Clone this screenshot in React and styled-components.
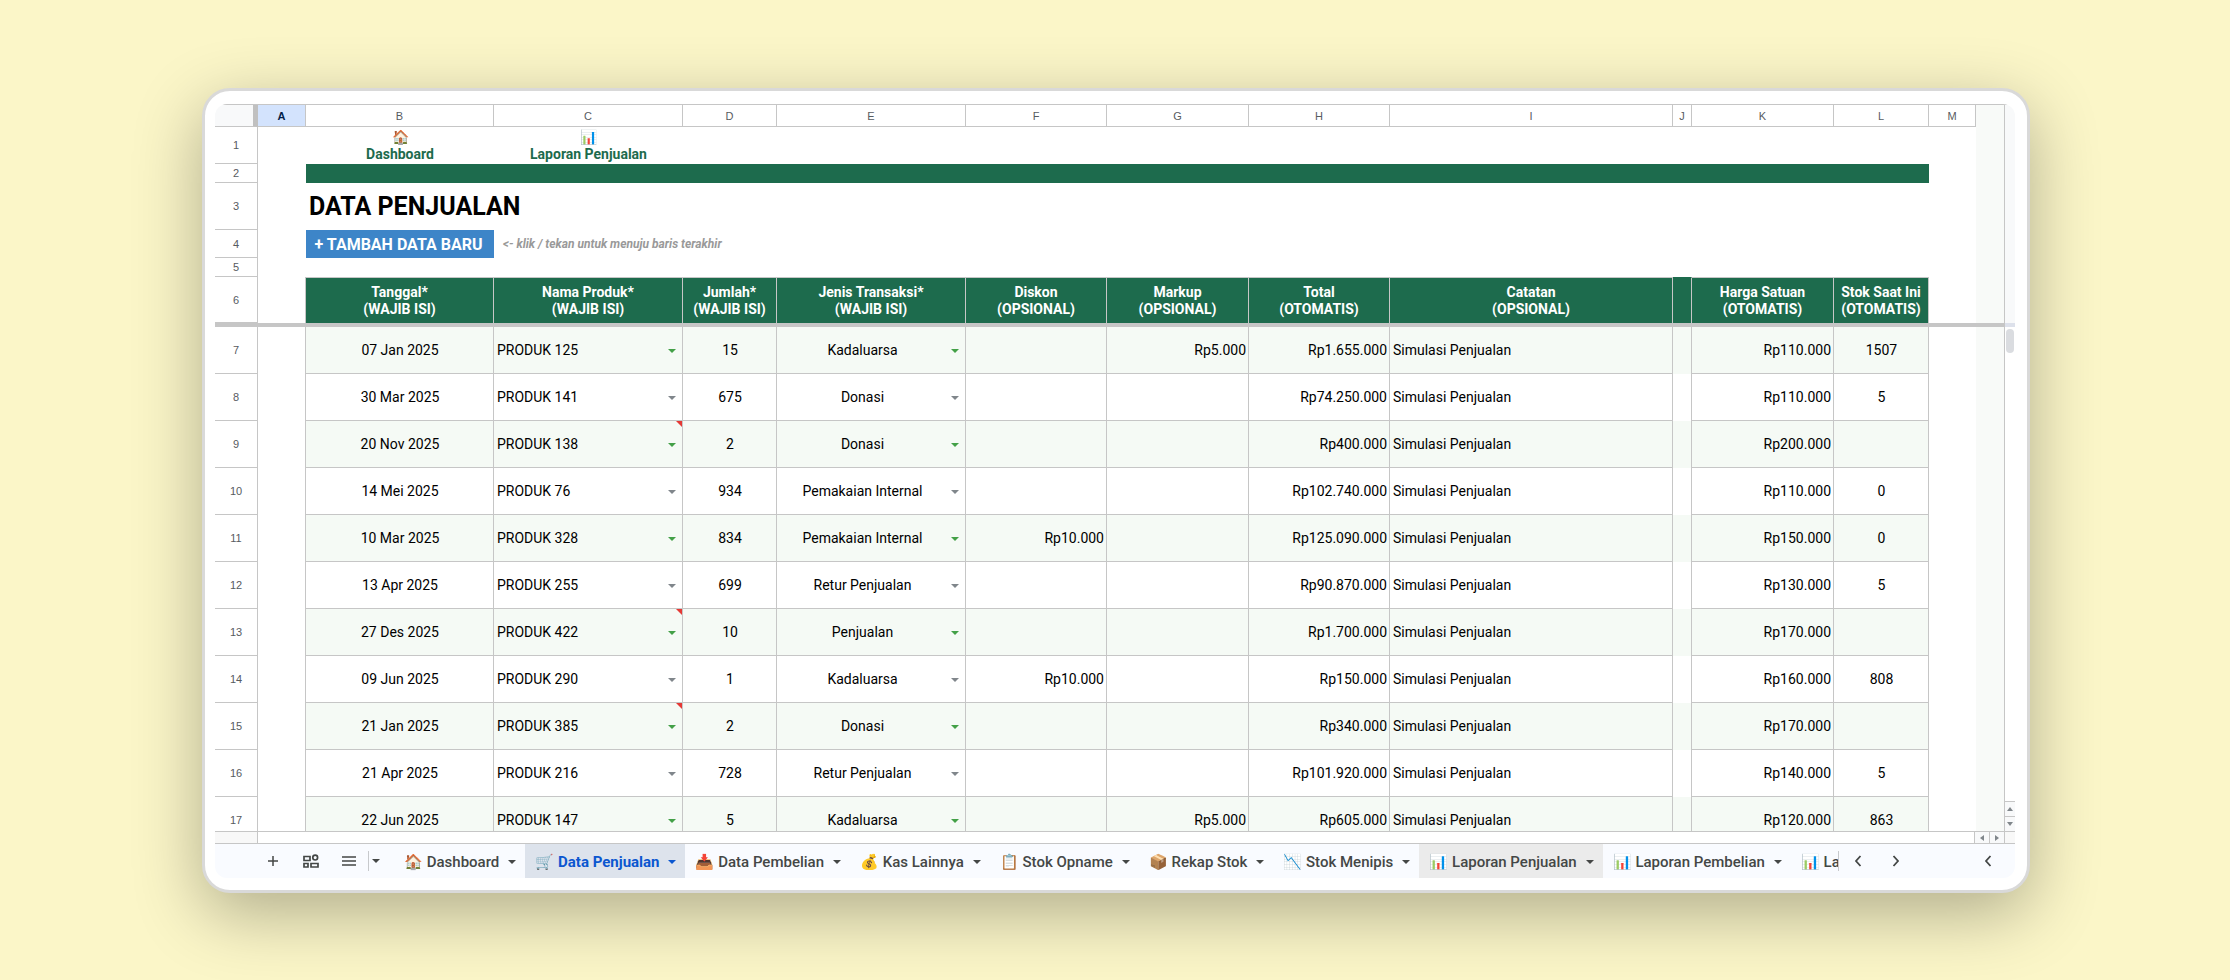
import React from 'react'
import styled, { createGlobalStyle } from 'styled-components'

const GlobalStyle = createGlobalStyle`
    * {
        box-sizing: border-box;
    }

    body {
        margin: 0;
        background: #fbf6c8;
        font-family: Roboto, "Liberation Sans", sans-serif;
    }

    button {
        font-family: inherit;
        border: 0;
        padding: 0;
        background: none;
        color: inherit;
        cursor: pointer;
    }
`

const line = '#c6c6c6'
const green = '#1d6b4d'
const band = '#f5faf5'

const Page = styled.div`
    display: flex;
    height: 100vh;
    min-height: 480px;
    padding: 88px 200px 87px 202px;
`

const Frame = styled.main`
    flex: 1;
    display: flex;
    min-width: 0;
    padding: 13px 12px 12px 10px;
    background: #fff;
    border: 3px solid #d9d9d9;
    border-radius: 28px;
    box-shadow: 0 20px 68px rgba(0, 0, 0, 0.3);
`

const Screen = styled.div`
    flex: 1;
    display: flex;
    flex-direction: column;
    min-width: 0;
    overflow: hidden;
    border-radius: 12px;
`

const Viewport = styled.div`
    flex: 1;
    display: flex;
    min-height: 0;
    border-top: 1px solid ${ line };
    border-bottom: 1px solid ${ line };
`

const Pane = styled.div`
    flex: 1;
    min-width: 0;
    overflow: hidden;
`

const Sheet = styled.table`
    width: 100%;
    table-layout: fixed;
    border-collapse: separate;
    border-spacing: 0;
    color: #000;
    font-size: 14px;
    line-height: 17px;
`

const Row = styled.tr`
    height: ${ p => p.$height }px;
`

const Letter = styled.th`
    padding: 0;
    border-right: 1px solid ${ line };
    border-bottom: 1px solid ${ line };
    background: ${ p => p.$selected ? '#d3e3fd' : '#fff' };
    color: ${ p => p.$selected ? '#041e49' : '#575b5f' };
    font: ${ p => p.$selected ? 'bold' : 'normal' } 11px/12px "Liberation Sans", sans-serif;
`

const Corner = styled.th`
    padding: 0;
    background: #f8f9fa;
    border-right: 5px solid #c0c0c0;
    border-bottom: 1px solid ${ line };
`

const RowNumber = styled.th`
    padding: 0;
    border-right: 1px solid ${ line };
    border-bottom: 1px solid ${ line };
    color: #575b5f;
    font: 11px/12px "Liberation Sans", sans-serif;
`

const Blank = styled.td`
    padding: 0;
    border-right: ${ p => p.$edge ? `1px solid ${ line }` : 0 };
    background: ${ p => p.$fill || 'transparent' };
`

const LinkCell = styled.td`
    padding: 0;
    text-align: center;

    a {
        display: block;
        color: ${ green };
        font-weight: 700;
        text-decoration: none;
    }

    span {
        display: block;
    }
`

const Band = styled.td`
    padding: 0;
    background: ${ green };
`

const TitleCell = styled.td`
    padding: 0 3px;

    h1 {
        margin: 0;
        font-size: 25px;
        line-height: 28px;
        font-weight: 700;
    }
`

const ButtonCell = styled.td`
    padding: 0;
    background: #3d85c8;
`

const AddButton = styled.button`
    display: block;
    width: 100%;
    height: 28px;
    padding-right: 3px;
    color: #fff;
    font-size: 16px;
    font-weight: 700;
`

const Note = styled.td`
    padding: 0 9px;
    color: #999;
    font-size: 12px;
    font-style: italic;
    font-weight: 700;
`

const Heading = styled.th`
    padding: 0;
    background: ${ green };
    border-right: 1px solid ${ line };
    border-top: 1px solid ${ p => p.children ? line : green };
    color: #fff;
    font-weight: 700;
    white-space: pre-line;
`

const Freeze = styled.td`
    height: 4px;
    padding: 0;
    background: #c6c6c6;
`

const Cell = styled.td`
    position: relative;
    padding: 0 2px 0 3px;
    border-right: 1px solid ${ line };
    border-bottom: 1px solid ${ line };
    background: ${ p => p.$banded ? band : '#fff' };
    text-align: ${ p => p.$align || 'center' };
    white-space: nowrap;
`

const Picker = styled.button`
    display: flex;
    align-items: center;
    width: 100%;
    font-size: 14px;
    line-height: 17px;

    span {
        flex: 1;
        text-align: ${ p => p.$align || 'center' };
    }

    svg {
        margin: 1px 4px 0 6px;
        color: ${ p => p.$banded ? '#43a047' : '#80868b' };
    }
`

const ErrorMark = styled.i`
    position: absolute;
    top: 0;
    right: 0;
    border-top: 6px solid #e53935;
    border-left: 6px solid transparent;
`

const ScrollColumn = styled.div`
    display: flex;
    flex-direction: column;
    width: 11px;
    border-left: 1px solid ${ line };
`

const ScrollHead = styled.div`
    height: 222px;
    background: #f8f9fa;
    border-bottom: 4px solid #dde1eb;
`

const ScrollTrack = styled.div`
    flex: 1;
    padding: 2px 1px;
`

const Thumb = styled.div`
    height: 24px;
    border-radius: 4px;
    background: #dadce0;
`

const Stepper = styled.button`
    display: flex;
    align-items: center;
    justify-content: center;
    color: #80868b;
`

const StepperDown = styled(Stepper)`
    height: 15px;
    border-top: 1px solid ${ line };
    background: #f8f9fa;
`

const StepperSide = styled(Stepper)`
    width: 15px;
    border-left: 1px solid ${ line };
    background: #f8f9fa;
`

const ScrollRow = styled.div`
    display: flex;
    height: 12px;
    border-bottom: 1px solid ${ line };
`

const ScrollCorner = styled.div`
    width: ${ p => p.$width }px;
    background: #f8f8f8;
    border-right: ${ p => p.$edge ? `1px solid ${ line }` : 0 };
    border-left: ${ p => p.$edge ? 0 : `1px solid ${ line }` };
`

const Spacer = styled.div`
    flex: 1;
`

const Footer = styled.footer`
    display: flex;
    height: 34px;
    background: #f9fbff;
    color: #444746;
`

const Tools = styled.div`
    display: flex;
    align-items: center;
    padding-left: 39px;
`

const TabScroller = styled.div`
    display: flex;
    align-items: center;
    width: 177px;
    padding-right: 8px;
`

const ToolButton = styled.button`
    display: flex;
    align-items: center;
    justify-content: center;
    width: ${ p => p.$width || 38 }px;
    height: 34px;
`

const Divider = styled.span`
    width: 1px;
    height: 20px;
    background: #c7c9cc;
`

const Tabs = styled.nav`
    flex: 1;
    display: flex;
    min-width: 0;
    overflow: hidden;
    padding-left: 11px;
`

const Tab = styled.button`
    flex: none;
    display: flex;
    align-items: center;
    padding: 1px ${ p => p.$last ? 0 : 9 }px 0 10px;
    background: ${ p => p.$active ? '#dde3ec' : p.$shaded ? '#ebebeb' : 'transparent' };
    color: ${ p => p.$active ? '#0b57d0' : '#444746' };
    font-size: 15px;
    font-weight: ${ p => p.$active ? 700 : 500 };
    white-space: pre;

    svg {
        margin-left: 9px;
    }
`

const columns = [
    ['A', 48], ['B', 188], ['C', 189], ['D', 94], ['E', 189], ['F', 141], ['G', 142],
    ['H', 141], ['I', 283], ['J', 19], ['K', 142], ['L', 95], ['M', 47],
]

const headings = [
    'Tanggal*\n(WAJIB ISI)',
    'Nama Produk*\n(WAJIB ISI)',
    'Jumlah*\n(WAJIB ISI)',
    'Jenis Transaksi*\n(WAJIB ISI)',
    'Diskon\n(OPSIONAL)',
    'Markup\n(OPSIONAL)',
    'Total\n(OTOMATIS)',
    'Catatan\n(OPSIONAL)',
    '',
    'Harga Satuan\n(OTOMATIS)',
    'Stok Saat Ini\n(OTOMATIS)',
]

// date, product, qty, type, discount, markup, total, unit price, stock, flagged
const sales = [
    ['07 Jan 2025', 'PRODUK 125', 15, 'Kadaluarsa', '', 'Rp5.000', 'Rp1.655.000', 'Rp110.000', '1507'],
    ['30 Mar 2025', 'PRODUK 141', 675, 'Donasi', '', '', 'Rp74.250.000', 'Rp110.000', '5'],
    ['20 Nov 2025', 'PRODUK 138', 2, 'Donasi', '', '', 'Rp400.000', 'Rp200.000', '', true],
    ['14 Mei 2025', 'PRODUK 76', 934, 'Pemakaian Internal', '', '', 'Rp102.740.000', 'Rp110.000', '0'],
    ['10 Mar 2025', 'PRODUK 328', 834, 'Pemakaian Internal', 'Rp10.000', '', 'Rp125.090.000', 'Rp150.000', '0'],
    ['13 Apr 2025', 'PRODUK 255', 699, 'Retur Penjualan', '', '', 'Rp90.870.000', 'Rp130.000', '5'],
    ['27 Des 2025', 'PRODUK 422', 10, 'Penjualan', '', '', 'Rp1.700.000', 'Rp170.000', '', true],
    ['09 Jun 2025', 'PRODUK 290', 1, 'Kadaluarsa', 'Rp10.000', '', 'Rp150.000', 'Rp160.000', '808'],
    ['21 Jan 2025', 'PRODUK 385', 2, 'Donasi', '', '', 'Rp340.000', 'Rp170.000', '', true],
    ['21 Apr 2025', 'PRODUK 216', 728, 'Retur Penjualan', '', '', 'Rp101.920.000', 'Rp140.000', '5'],
    ['22 Jun 2025', 'PRODUK 147', 5, 'Kadaluarsa', '', 'Rp5.000', 'Rp605.000', 'Rp120.000', '863'],
]

const tabs = [
    { icon: '🏠', label: 'Dashboard' },
    { icon: '🛒', label: 'Data Penjualan', active: true },
    { icon: '📥', label: 'Data Pembelian' },
    { icon: '💰', label: 'Kas Lainnya' },
    { icon: '📋', label: 'Stok Opname' },
    { icon: '📦', label: 'Rekap Stok' },
    { icon: '📉', label: 'Stok Menipis' },
    { icon: '📊', label: 'Laporan Penjualan', shaded: true },
    { icon: '📊', label: 'Laporan Pembelian' },
    { icon: '📊', label: 'La', last: true },
]

const Caret = () => (
    <svg width="8" height="4" viewBox="0 0 8 4" fill="currentColor" aria-hidden="true">
        <path d="M0 0h8L4 4z" />
    </svg>
)

const turns = { up: 180, down: 0, left: 90, right: 270 }

const Arrow = ({ to }) => (
    <svg width="6" height="6" viewBox="0 0 6 6" fill="currentColor" aria-hidden="true">
        <path d="M0 1h6L3 5z" transform={ `rotate(${ turns[to] } 3 3)` } />
    </svg>
)

const Chevron = ({ right }) => (
    <svg width="8" height="12" viewBox="0 0 8 12" fill="none" stroke="currentColor" strokeWidth="1.8" aria-hidden="true">
        <path d={ right ? 'M1.5 1l4.5 5-4.5 5' : 'M6.5 1L2 6l4.5 5' } />
    </svg>
)

const SaleRow = ({ sale, number }) => {
    const [date, product, qty, type, discount, markup, total, price, stock, flagged] = sale
    const banded = number % 2 === 1

    return (
        <Row $height={ 47 }>
            <RowNumber scope="row">{ number }</RowNumber>
            <Blank $edge />
            <Cell $banded={ banded }>{ date }</Cell>
            <Cell $banded={ banded }>
                <Picker $banded={ banded } $align="left">
                    <span>{ product }</span>
                    <Caret />
                </Picker>
                { flagged && <ErrorMark /> }
            </Cell>
            <Cell $banded={ banded }>{ qty }</Cell>
            <Cell $banded={ banded }>
                <Picker $banded={ banded }>
                    <span>{ type }</span>
                    <Caret />
                </Picker>
            </Cell>
            <Cell $banded={ banded } $align="right">{ discount }</Cell>
            <Cell $banded={ banded } $align="right">{ markup }</Cell>
            <Cell $banded={ banded } $align="right">{ total }</Cell>
            <Cell $banded={ banded } $align="left">Simulasi Penjualan</Cell>
            <Blank $edge $fill={ banded ? band : '#fff' } />
            <Cell $banded={ banded } $align="right">{ price }</Cell>
            <Cell $banded={ banded }>{ stock }</Cell>
            <Blank />
            <Blank $fill="#f8faf8" />
        </Row>
    )
}

const SalesSheet = () => (
    <Sheet>
        <colgroup>
            <col width="43" />
            { columns.map(([name, width]) => <col key={ name } width={ width } />) }
            <col width="28" />
        </colgroup>
        <thead>
            <Row $height={ 22 }>
                <Corner />
                { columns.map(([name]) => (
                    <Letter key={ name } scope="col" $selected={ name === 'A' }>{ name }</Letter>
                )) }
                <Blank $fill="#f8faf8" />
            </Row>
        </thead>
        <tbody>
            <Row $height={ 37 }>
                <RowNumber scope="row">1</RowNumber>
                <Blank />
                <LinkCell><a href="#dashboard"><span>🏠</span>Dashboard</a></LinkCell>
                <LinkCell><a href="#laporan"><span>📊</span>Laporan Penjualan</a></LinkCell>
                <Blank colSpan={ 10 } />
                <Blank $fill="#f8faf8" />
            </Row>
            <Row $height={ 19 }>
                <RowNumber scope="row">2</RowNumber>
                <Blank />
                <Band colSpan={ 11 } />
                <Blank />
                <Blank $fill="#f8faf8" />
            </Row>
            <Row $height={ 47 }>
                <RowNumber scope="row">3</RowNumber>
                <Blank />
                <TitleCell colSpan={ 11 }><h1>DATA PENJUALAN</h1></TitleCell>
                <Blank />
                <Blank $fill="#f8faf8" />
            </Row>
            <Row $height={ 28 }>
                <RowNumber scope="row">4</RowNumber>
                <Blank />
                <ButtonCell><AddButton>+ TAMBAH DATA BARU</AddButton></ButtonCell>
                <Note colSpan={ 10 }>{ '<- klik / tekan untuk menuju baris terakhir' }</Note>
                <Blank />
                <Blank $fill="#f8faf8" />
            </Row>
            <Row $height={ 19 }>
                <RowNumber scope="row">5</RowNumber>
                <Blank />
                <Blank colSpan={ 12 } />
                <Blank $fill="#f8faf8" />
            </Row>
            <Row $height={ 46 }>
                <RowNumber scope="row">6</RowNumber>
                <Blank $edge />
                { headings.map((text, i) => <Heading key={ i } scope="col">{ text }</Heading>) }
                <Blank />
                <Blank $fill="#f8faf8" />
            </Row>
            <tr>
                <Freeze colSpan={ 15 } />
            </tr>
            { sales.map((sale, i) => <SaleRow key={ i } sale={ sale } number={ i + 7 } />) }
        </tbody>
    </Sheet>
)

const SheetTabs = () => (
    <Footer>
        <Tools>
            <ToolButton aria-label="Tambahkan sheet">
                <svg width="10" height="10" viewBox="0 0 10 10" stroke="currentColor" strokeWidth="1.5">
                    <path d="M5 0v10M0 5h10" />
                </svg>
            </ToolButton>
            <ToolButton aria-label="Tampilan">
                <svg width="16" height="14" viewBox="0 0 16 14" fill="none" stroke="currentColor" strokeWidth="1.7">
                    <path d="M1 2.500h6v4H1zM1 9.500h4v3.500H1zM8 9.500h7v3.500H8z" />
                    <circle cx="12.200" cy="3.600" r="2.400" />
                </svg>
            </ToolButton>
            <ToolButton aria-label="Semua sheet">
                <svg width="14" height="12" viewBox="0 0 14 12" stroke="currentColor" strokeWidth="1.7">
                    <path d="M0 2h14M0 6h14M0 10h14" />
                </svg>
            </ToolButton>
            <Divider />
            <ToolButton $width={ 14 } aria-label="Lainnya"><Caret /></ToolButton>
        </Tools>
        <Tabs>
            { tabs.map(({ icon, label, active, shaded, last }) => (
                <Tab key={ label } $active={ active } $shaded={ shaded } $last={ last }>
                    { `${ icon } ${ label }` }
                    { !last && <Caret /> }
                </Tab>
            )) }
        </Tabs>
        <TabScroller>
            <Divider />
            <ToolButton aria-label="Geser ke kiri"><Chevron /></ToolButton>
            <ToolButton aria-label="Geser ke kanan"><Chevron right /></ToolButton>
            <Spacer />
            <ToolButton aria-label="Tampilkan panel samping"><Chevron /></ToolButton>
        </TabScroller>
    </Footer>
)

const App = () => (
    <Page>
        <GlobalStyle />
        <Frame>
            <Screen>
                <Viewport>
                    <Pane><SalesSheet /></Pane>
                    <ScrollColumn>
                        <ScrollHead />
                        <ScrollTrack><Thumb /></ScrollTrack>
                        <StepperDown aria-label="Gulir ke atas"><Arrow to="up" /></StepperDown>
                        <StepperDown aria-label="Gulir ke bawah"><Arrow to="down" /></StepperDown>
                    </ScrollColumn>
                </Viewport>
                <ScrollRow>
                    <ScrollCorner $width={ 43 } $edge />
                    <Spacer />
                    <StepperSide aria-label="Gulir ke kiri"><Arrow to="left" /></StepperSide>
                    <StepperSide aria-label="Gulir ke kanan"><Arrow to="right" /></StepperSide>
                    <ScrollCorner $width={ 11 } />
                </ScrollRow>
                <SheetTabs />
            </Screen>
        </Frame>
    </Page>
)

export default App
